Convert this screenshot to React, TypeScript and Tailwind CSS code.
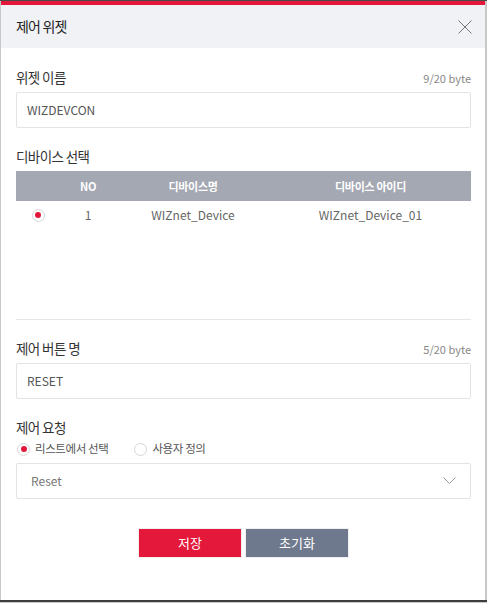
function Radio({ checked }: { checked?: boolean }) {
  return (
    <span className="w-[13px] h-[13px] rounded-full border border-[#d6d6d6] bg-white flex items-center justify-center shrink-0">
      {checked && <span className="w-[6px] h-[6px] rounded-full bg-[#e4173a]" />}
    </span>
  );
}

function Label({ text, count }: { text: string; count?: string }) {
  return (
    <div className="flex h-5 items-center justify-between">
      <span className="text-[13.5px] tracking-[-0.6px] text-[#333]">{text}</span>
      {count && <span className="text-[11px] text-[#888] pt-[2px]">{count}</span>}
    </div>
  );
}

function TextBox({ value }: { value: string }) {
  return (
    <div className="h-[36px] border border-[#e3e3e3] rounded-[2px] flex items-center pl-[10px] text-[12px] text-[#555]">
      {value}
    </div>
  );
}

export default function App() {
  return (
    <div className="w-[487px] h-[603px] flex flex-col bg-[#c8c8c8] font-['Noto_Sans_CJK_KR','Noto_Sans',sans-serif]">
      <div className="h-px bg-[#4a4a4a]" />
      <div className="flex-1 flex flex-col ml-px mr-[2px] bg-white">
        <div className="h-[4px] bg-[#e4173a]" />

        {/* header */}
        <div className="h-[43px] bg-[#f1f2f6] flex items-center justify-between pl-[15px] pr-[13px]">
          <span className="text-[14px] tracking-[-0.8px] text-[#222]">제어 위젯</span>
          <svg width="14" height="14" viewBox="0 0 14 14" fill="none">
            <path d="M0.5 0.5 L13.5 13.5 M13.5 0.5 L0.5 13.5" stroke="#777" strokeWidth="1" />
          </svg>
        </div>

        {/* body */}
        <div className="flex-1 flex flex-col pl-[15px] pr-[14px] pt-[19px]">
          <Label text="위젯 이름" count="9/20 byte" />
          <div className="mt-[5px]">
            <TextBox value="WIZDEVCON" />
          </div>

          <div className="mt-[18px]">
            <Label text="디바이스 선택" />
          </div>

          <div className="mt-[5px] h-[148px] flex flex-col">
            <div className="h-[30px] bg-[#a4a8b2] grid grid-cols-[44px_56px_154px_1fr] items-center text-center text-[11px] font-bold text-white tracking-[-0.3px]">
              <span />
              <span>NO</span>
              <span>디바이스명</span>
              <span>디바이스 아이디</span>
            </div>
            <div className="h-[28px] grid grid-cols-[44px_56px_154px_1fr] items-center text-center text-[12px] text-[#666]">
              <span className="flex justify-center">
                <Radio checked />
              </span>
              <span>1</span>
              <span>WIZnet_Device</span>
              <span>WIZnet_Device_01</span>
            </div>
          </div>
          <div className="h-px bg-[#e6e6e6]" />

          <div className="mt-[18px]">
            <Label text="제어 버튼 명" count="5/20 byte" />
          </div>
          <div className="mt-[5px]">
            <TextBox value="RESET" />
          </div>

          <div className="mt-[18px]">
            <Label text="제어 요청" />
          </div>
          <div className="mt-[4px] h-4 flex items-center text-[11.5px] tracking-[-0.4px] text-[#555]">
            <label className="flex items-center gap-[5px] pl-[1px]">
              <Radio checked />
              <span>리스트에서 선택</span>
            </label>
            <label className="flex items-center gap-[5px] ml-[26px]">
              <Radio />
              <span>사용자 정의</span>
            </label>
          </div>
          <div className="mt-[6px] h-[36px] border border-[#e3e3e3] rounded-[2px] flex items-center justify-between pl-[14px] pr-[14px] text-[12px] text-[#777]">
            <span>Reset</span>
            <svg width="13" height="8" viewBox="0 0 13 8" fill="none">
              <path d="M0.5 0.5 L6.5 6.5 L12.5 0.5" stroke="#9a9a9a" strokeWidth="1" />
            </svg>
          </div>

          <div className="mt-[29px] flex justify-center gap-[3px]">
            <button className="w-[104px] h-[30px] bg-[#e4183a] border border-[#f0f0f0] text-white text-[13px]">
              저장
            </button>
            <button className="w-[104px] h-[30px] bg-[#6f798e] border border-[#f0f0f0] text-white text-[13px]">
              초기화
            </button>
          </div>
        </div>
      </div>
      <div className="h-[2px] bg-[#3d3d3d]" />
      <div className="h-px bg-[#c8c8c8]" />
    </div>
  );
}
